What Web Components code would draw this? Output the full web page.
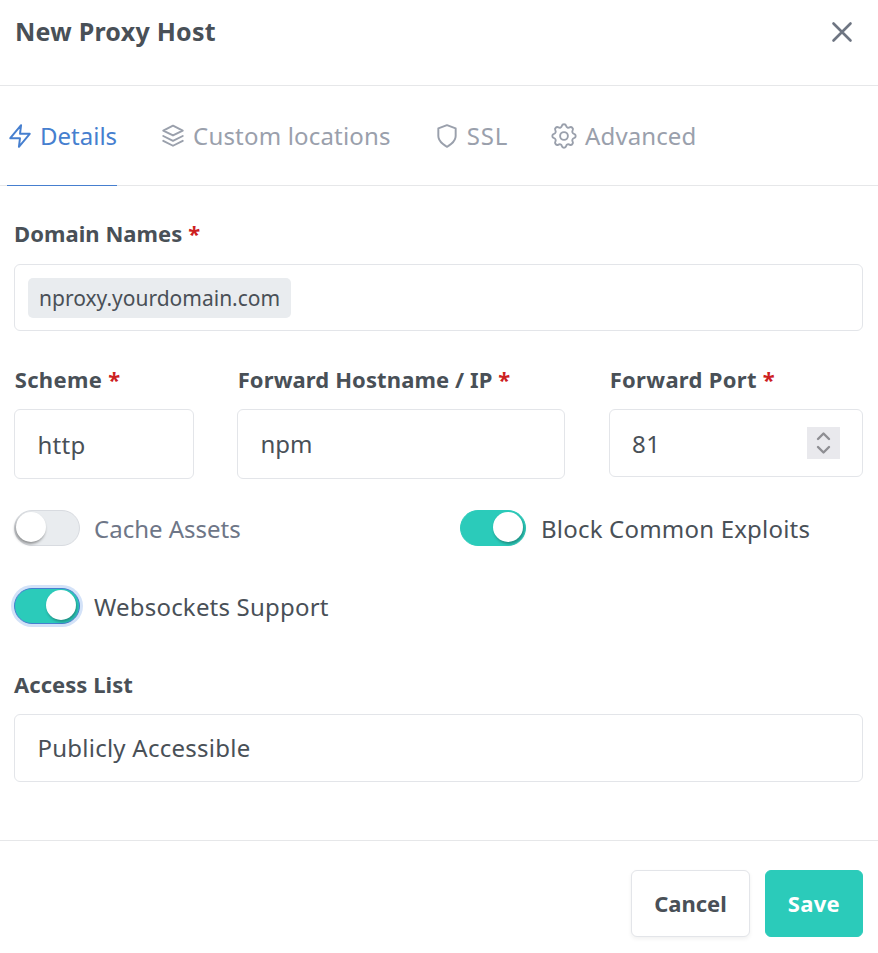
<!DOCTYPE html>
<html lang="en">
<head>
<meta charset="utf-8">
<title>New Proxy Host</title>
<style>
    html, body { margin: 0; padding: 0; background: #fff; }
    body { font-family: "Noto Sans", "Liberation Sans", sans-serif; color: #495057; }
</style>
</head>
<body>
<proxy-dialog>
    <dialog-header slot="header">New Proxy Host</dialog-header>
    <tab-bar slot="tabs">
        <tab-item icon="bolt" active style="letter-spacing:0">Details</tab-item>
        <tab-item icon="layers" style="letter-spacing:.18px">Custom locations</tab-item>
        <tab-item icon="shield" style="letter-spacing:.8px">SSL</tab-item>
        <tab-item icon="gear" style="gap:8px">Advanced</tab-item>
    </tab-bar>

    <form-row>
        <form-field label="Domain Names" required style="flex:1;--label-gap:19px">
            <text-box height="67"><domain-chip>nproxy.yourdomain.com</domain-chip></text-box>
        </form-field>
    </form-row>

    <form-row style="margin-top:36px;gap:43px">
        <form-field label="Scheme" required style="width:180px;--label-inset:.7px;--label-spacing:.35px">
            <text-box height="70" style="letter-spacing:.3px">http</text-box>
        </form-field>
        <form-field label="Forward Hostname / IP" required style="width:328px;--label-inset:.7px;--label-spacing:.1px">
            <text-box height="70" style="letter-spacing:0;padding-bottom:2px">npm</text-box>
        </form-field>
        <form-field label="Forward Port" required style="width:254px;margin-left:1px;--label-inset:.7px;--label-spacing:.3px">
            <text-box height="68" spinner style="letter-spacing:.5px">81</text-box>
        </form-field>
    </form-row>

    <form-row style="margin-top:30px">
        <toggle-switch style="width:446px;letter-spacing:0">Cache Assets</toggle-switch>
        <toggle-switch checked style="gap:15px">Block Common Exploits</toggle-switch>
    </form-row>
    <form-row style="margin-top:40px">
        <toggle-switch checked focused>Websockets Support</toggle-switch>
    </form-row>

    <form-row style="margin-top:47px">
        <form-field label="Access List" style="flex:1">
            <text-box height="68" style="padding-bottom:2px">Publicly Accessible</text-box>
        </form-field>
    </form-row>

    <action-button slot="footer">Cancel</action-button>
    <action-button slot="footer" primary>Save</action-button>
</proxy-dialog>

<script>
const ICONS = {
    bolt: '<path d="M13 2 3 14h9l-1 8 10-12h-9l1-8z"/>',
    layers: '<path d="M12 2.5 3 7l9 4.5L21 7l-9-4.5z"/><path d="m3 12 9 4.5 9-4.5"/><path d="m3 16.5 9 4.5 9-4.5"/>',
    shield: '<path d="M12 22s8-4 8-10V5l-8-3-8 3v7c0 6 8 10 8 10z"/>',
    gear: '<g transform="translate(12 12) scale(1.2) translate(-12 -12)" stroke-width="1.45"><path d="M10.325 4.317c.426-1.756 2.924-1.756 3.35 0a1.724 1.724 0 0 0 2.573 1.066c1.543-.94 3.31.826 2.37 2.37a1.724 1.724 0 0 0 1.065 2.572c1.756.426 1.756 2.924 0 3.35a1.724 1.724 0 0 0-1.066 2.573c.94 1.543-.826 3.31-2.37 2.37a1.724 1.724 0 0 0-2.572 1.065c-.426 1.756-2.924 1.756-3.35 0a1.724 1.724 0 0 0-2.573-1.066c-1.543.94-3.31-.826-2.37-2.37a1.724 1.724 0 0 0-1.065-2.572c-1.756-.426-1.756-2.924 0-3.35a1.724 1.724 0 0 0 1.066-2.573c-.94-1.543.826-3.31 2.37-2.37 1 .608 2.296.07 2.572-1.065z"/><circle cx="12" cy="12" r="3"/></g>'
};

function defineElement(name, css, html, setup) {
    customElements.define(name, class extends HTMLElement {
        connectedCallback() {
            if (this.shadowRoot) return;
            this.attachShadow({ mode: 'open' });
            this.shadowRoot.innerHTML = `<style>${css}</style>${html(this)}`;
            if (setup) setup(this);
        }
    });
}

defineElement('proxy-dialog', `
    :host { display: flex; flex-direction: column; width: 878px; height: 953px; background: #fff; overflow: hidden; }
    .body { flex: 1; padding: 35px 15px 0 14px; }
    .footer { display: flex; justify-content: flex-end; align-items: flex-start; gap: 15px; height: 113px; box-sizing: border-box; padding: 29px 15px 0 0; border-top: 1px solid #e6e7e9; }
`, () => `
    <slot name="header"></slot>
    <slot name="tabs"></slot>
    <div class="body"><slot></slot></div>
    <div class="footer"><slot name="footer"></slot></div>
`);

defineElement('dialog-header', `
    :host { display: flex; align-items: center; justify-content: space-between; height: 86px; box-sizing: border-box; padding: 0 25px 21px 15px; border-bottom: 1px solid #e6e7e9; font-size: 25px; font-weight: 700; letter-spacing: .25px; color: #495057; }
    span { margin-bottom: 2px; }
    svg { width: 22px; height: 22px; fill: none; stroke: #6e7582; stroke-width: 2.6; stroke-linecap: round; }
`, () => `
    <span><slot></slot></span>
    <svg viewBox="0 0 22 22"><path d="M2.5 2.5l17 17M19.5 2.5l-17 17"/></svg>
`);

defineElement('tab-bar', `
    :host { display: flex; height: 100px; box-sizing: border-box; padding-left: 7px; gap: 43px; border-bottom: 1px solid #e6e7e9; }
`, () => `<slot></slot>`);

defineElement('tab-item', `
    :host { display: flex; align-items: center; gap: 7px; height: 100px; box-sizing: border-box; margin-bottom: -1px; border-bottom: 1px solid transparent; font-size: 24px; letter-spacing: .12px; color: #9aa0ac; }
    :host([active]) { color: #467fcf; border-bottom-color: #467fcf; }
    svg { width: 26px; height: 26px; fill: none; stroke: currentColor; stroke-width: 1.8; stroke-linecap: round; stroke-linejoin: round; flex: none; }
`, (el) => `
    <svg viewBox="0 0 24 24">${ICONS[el.getAttribute('icon')]}</svg>
    <span><slot></slot></span>
`);

defineElement('form-row', `
    :host { display: flex; }
`, () => `<slot></slot>`);

defineElement('form-field', `
    :host { display: block; }
    .label { height: 24px; line-height: 24px; margin-bottom: var(--label-gap, 18px); padding-left: var(--label-inset, 0); font-size: 22px; font-weight: 700; letter-spacing: var(--label-spacing, .05px); color: #495057; }
    .req { color: #cd201f; }
`, (el) => `
    <div class="label">${el.getAttribute('label')}${el.hasAttribute('required') ? ' <span class="req">*</span>' : ''}</div>
    <slot></slot>
`);

defineElement('text-box', `
    :host { display: flex; align-items: center; justify-content: space-between; box-sizing: border-box; padding: 0 22px 0 22.4px; border: 1px solid #e3e5e9; border-radius: 6px; background: #fff; font-size: 24px; letter-spacing: .25px; color: #495057; }
    :host([spinner]) { padding: 0 22px; }
    .spin { width: 33px; height: 32px; background: #e9e9ed; display: flex; align-items: center; justify-content: center; }
    .spin svg { width: 17px; height: 26px; fill: none; stroke: #8e8e93; stroke-width: 2.4; stroke-linecap: round; stroke-linejoin: round; }
`, (el) => {
    el.style.height = el.getAttribute('height') + 'px';
    return `<span><slot></slot></span>${el.hasAttribute('spinner') ? '<div class="spin"><svg viewBox="0 0 17 26"><path d="M3 9l5.5-5.5L14 9M3 17l5.5 5.5L14 17"/></svg></div>' : ''}`;
});

defineElement('domain-chip', `
    :host { display: inline-block; margin-left: -9.4px; padding: 0 11px; height: 40px; line-height: 40px; border-radius: 5px; background: #e9ecef; font-size: 21px; letter-spacing: 0; color: #495057; }
`, () => `<slot></slot>`);

defineElement('toggle-switch', `
    :host { display: flex; align-items: center; gap: 14px; height: 38px; font-size: 24px; letter-spacing: .2px; color: #6e7687; }
    :host([checked]) { color: #495057; }
    .track { position: relative; width: 66px; height: 36px; box-sizing: border-box; border-radius: 18px; border: 1px solid #d8dbe0; background: #e9ecef; flex: none; }
    :host([checked]) .track { background: #2bcbba; border-color: #2bcbba; }
    :host([focused]) .track { border-color: #467fcf; box-shadow: 0 0 0 3px #d3e2f8; }
    .knob { position: absolute; top: 1px; left: 1px; width: 30px; height: 30px; border-radius: 50%; background: #fff; box-shadow: -1px 2px 3px rgba(0,0,0,.4); }
    :host([checked]) .knob { left: auto; right: 2px; box-shadow: 1px 2px 3px rgba(0,0,0,.3); }
    :host([focused]) .knob { right: 3px; }
`, () => `
    <div class="track"><div class="knob"></div></div>
    <span><slot></slot></span>
`);

defineElement('action-button', `
    :host { display: flex; align-items: center; justify-content: center; height: 67px; box-sizing: border-box; padding: 0 22px 2px; border: 1px solid #e3e5e9; border-radius: 6px; background: #fff; box-shadow: 0 2px 4px rgba(0,0,0,.06); font-size: 22px; font-weight: 700; color: #495057; }
    :host([primary]) { letter-spacing: .3px; background: #2bcbba; border-color: #2bcbba; color: #fff; box-shadow: none; }
`, () => `<slot></slot>`);
</script>
</body>
</html>
